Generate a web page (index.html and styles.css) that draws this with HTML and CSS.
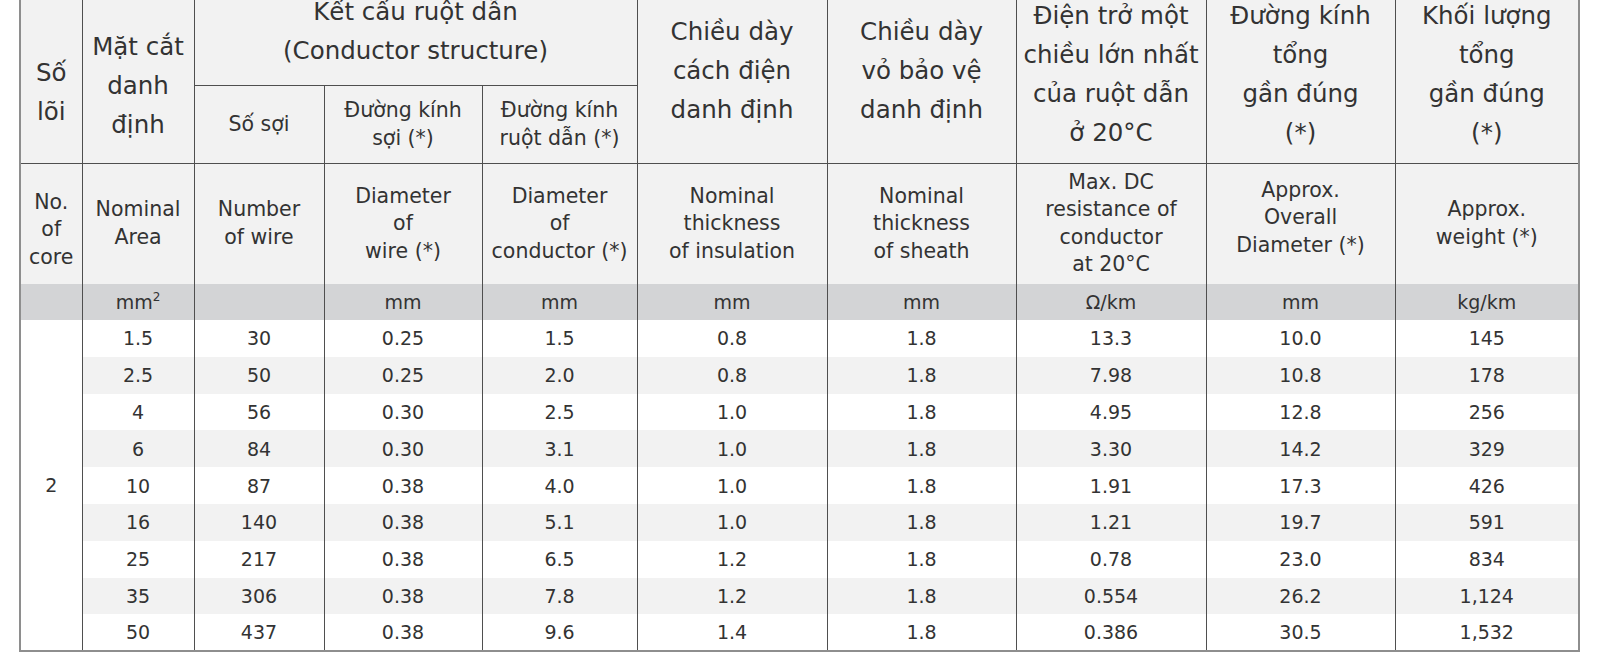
FILE: index.html
```html
<!DOCTYPE html>
<html lang="vi">
<head>
<meta charset="utf-8">
<title>Cable specification</title>
<link rel="stylesheet" href="styles.css">
</head>
<body>
<div class="sheet">
<table class="spec">
  <colgroup>
    <col class="w1"><col class="w2"><col class="w3"><col class="w4"><col class="w5">
    <col class="w6"><col class="w7"><col class="w8"><col class="w9"><col class="w10">
  </colgroup>
  <thead>
    <tr class="r-top">
      <th rowspan="2" class="vi core-h">Số<br>lõi</th>
      <th rowspan="2" class="vi area-h">Mặt cắt<br>danh<br>định</th>
      <th colspan="3" class="vi group-h">Kết cấu ruột dẫn<br>(Conductor structure)</th>
      <th rowspan="2" class="vi thick-h">Chiều dày<br>cách điện<br>danh định</th>
      <th rowspan="2" class="vi thick-h">Chiều dày<br>vỏ bảo vệ<br>danh định</th>
      <th rowspan="2" class="vi">Điện trở một<br>chiều lớn nhất<br>của ruột dẫn<br>ở 20°C</th>
      <th rowspan="2" class="vi">Đường kính<br>tổng<br>gần đúng<br>(*)</th>
      <th rowspan="2" class="vi">Khối lượng<br>tổng<br>gần đúng<br>(*)</th>
    </tr>
    <tr class="r-sub">
      <th class="sub">Số sợi</th>
      <th class="sub">Đường kính<br>sợi (*)</th>
      <th class="sub">Đường kính<br>ruột dẫn (*)</th>
    </tr>
    <tr class="r-en">
      <th class="en down">No.<br>of<br>core</th>
      <th class="en">Nominal<br>Area</th>
      <th class="en">Number<br>of wire</th>
      <th class="en">Diameter<br>of<br>wire (*)</th>
      <th class="en">Diameter<br>of<br>conductor (*)</th>
      <th class="en">Nominal<br>thickness<br>of insulation</th>
      <th class="en">Nominal<br>thickness<br>of sheath</th>
      <th class="en">Max. DC<br>resistance of<br>conductor<br>at 20°C</th>
      <th class="en up">Approx.<br>Overall<br>Diameter (*)</th>
      <th class="en">Approx.<br>weight (*)</th>
    </tr>
    <tr class="r-unit">
      <td></td>
      <td>mm<span class="sq">2</span></td>
      <td></td>
      <td>mm</td>
      <td>mm</td>
      <td>mm</td>
      <td>mm</td>
      <td>Ω/km</td>
      <td>mm</td>
      <td>kg/km</td>
    </tr>
  </thead>
  <tbody>
    <tr class="d"><td rowspan="9" class="core">2</td><td>1.5</td><td>30</td><td>0.25</td><td>1.5</td><td>0.8</td><td>1.8</td><td>13.3</td><td>10.0</td><td>145</td></tr>
    <tr class="d alt"><td>2.5</td><td>50</td><td>0.25</td><td>2.0</td><td>0.8</td><td>1.8</td><td>7.98</td><td>10.8</td><td>178</td></tr>
    <tr class="d"><td>4</td><td>56</td><td>0.30</td><td>2.5</td><td>1.0</td><td>1.8</td><td>4.95</td><td>12.8</td><td>256</td></tr>
    <tr class="d alt"><td>6</td><td>84</td><td>0.30</td><td>3.1</td><td>1.0</td><td>1.8</td><td>3.30</td><td>14.2</td><td>329</td></tr>
    <tr class="d"><td>10</td><td>87</td><td>0.38</td><td>4.0</td><td>1.0</td><td>1.8</td><td>1.91</td><td>17.3</td><td>426</td></tr>
    <tr class="d alt"><td>16</td><td>140</td><td>0.38</td><td>5.1</td><td>1.0</td><td>1.8</td><td>1.21</td><td>19.7</td><td>591</td></tr>
    <tr class="d"><td>25</td><td>217</td><td>0.38</td><td>6.5</td><td>1.2</td><td>1.8</td><td>0.78</td><td>23.0</td><td>834</td></tr>
    <tr class="d alt"><td>35</td><td>306</td><td>0.38</td><td>7.8</td><td>1.2</td><td>1.8</td><td>0.554</td><td>26.2</td><td>1,124</td></tr>
    <tr class="d last"><td>50</td><td>437</td><td>0.38</td><td>9.6</td><td>1.4</td><td>1.8</td><td>0.386</td><td>30.5</td><td>1,532</td></tr>
  </tbody>
</table>
</div>
</body>
</html>
```

FILE: styles.css
```css
html, body {
  margin: 0;
  padding: 0;
  background: #ffffff;
}

body {
  font-family: "DejaVu Sans", "Liberation Sans", sans-serif;
  color: #333333;
  overflow: hidden;
}

.sheet {
  padding-left: 19px;
  margin-top: -15px;
}

.spec {
  border-collapse: collapse;
  table-layout: fixed;
  width: 1561px;
  border-left: 2px solid #8e8e8e;
  border-right: 2px solid #8e8e8e;
  border-bottom: 2px solid #8e8e8e;
}

.w1 { width: 62px; }
.w2 { width: 112px; }
.w3 { width: 130px; }
.w4 { width: 158px; }
.w5 { width: 155px; }
.w6 { width: 190px; }
.w7 { width: 189px; }
.w8 { width: 190px; }
.w9 { width: 189px; }
.w10 { width: 184px; }

.spec th,
.spec td {
  padding: 0;
  text-align: center;
  vertical-align: middle;
  font-weight: normal;
  white-space: nowrap;
  border-left: 1px solid #4f4f4f;
  border-right: 1px solid #4f4f4f;
}

.spec thead th {
  background: #f2f2f2;
}

/* header row 1 (Vietnamese) */
.r-top { height: 100px; }
.r-sub { height: 78px; }
.r-en { height: 121px; }
.r-unit { height: 36px; }

.vi {
  font-size: 24.5px;
  line-height: 39px;
  border-bottom: 1px solid #4f4f4f;
}

.core-h { padding-top: 37px !important; }
.area-h { padding-top: 24px !important; }
.thick-h { padding-bottom: 6px !important; }
.group-h { padding-bottom: 7px !important; }

.sub {
  font-size: 20.5px;
  line-height: 28px;
  border-bottom: 1px solid #4f4f4f;
}

.en {
  font-size: 20.5px;
  line-height: 27.5px;
}

.down { padding-top: 12px !important; }
.up { padding-bottom: 12px !important; }

.r-unit td {
  background: #d3d4d6;
  font-size: 19px;
  line-height: 24px;
}

.sq {
  font-size: 12px;
  vertical-align: 8px;
  line-height: 0;
}

.d { height: 36.8px; }

.d td {
  font-size: 19px;
  line-height: 24px;
  background: #ffffff;
}

.d.alt td {
  background: #f2f2f2;
}

.core {
  background: #ffffff;
}
```
